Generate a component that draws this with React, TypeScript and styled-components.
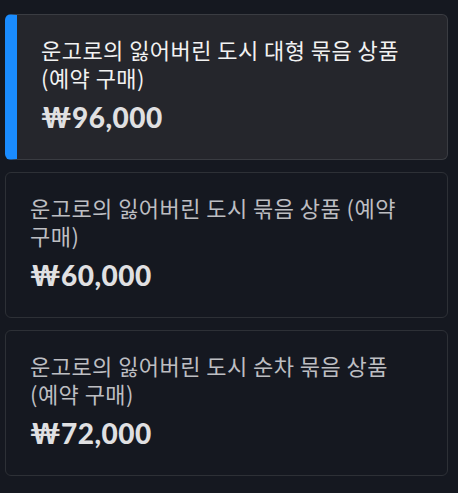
import { type FC } from "react";
import styled, { createGlobalStyle } from "styled-components";

const GlobalStyle = createGlobalStyle`
  html, body {
    margin: 0;
    background: #ffffff;
  }
  body {
    font-family: "Noto Sans CJK KR", "Noto Sans", sans-serif;
  }
`;

const ListProducts = [
  { title: "운고로의 잃어버린 도시 대형 묶음 상품 (예약 구매)", price: "₩96,000", selected: true },
  { title: "운고로의 잃어버린 도시 묶음 상품 (예약 구매)", price: "₩60,000", selected: false },
  { title: "운고로의 잃어버린 도시 순차 묶음 상품 (예약 구매)", price: "₩72,000", selected: false },
];

const Page = styled.div`
  background: #151820;
  padding: 14px 10px 17px 5px;
  display: flex;
  flex-direction: column;
  gap: 12px;
`;

const Card = styled.div<{ $selected: boolean }>`
  border: 1px solid ${({ $selected }) => ($selected ? "#3a3c42" : "#2d3036")};
  border-left: ${({ $selected }) => ($selected ? "12px solid #1a8cff" : "1px solid #2d3036")};
  border-radius: 6px;
  background: ${({ $selected }) => ($selected ? "#25262c" : "#151820")};
  padding: 20px 24px 24px;
  height: 146px;
  box-sizing: border-box;
  .title {
    font-size: 22px;
    line-height: 28px;
    letter-spacing: 0.45px;
    word-break: keep-all;
    color: ${({ $selected }) => ($selected ? "#f2f2f2" : "#bdbec2")};
  }
  .price {
    margin-top: 10px;
    font-family: Lato, "Noto Sans", sans-serif;
    font-weight: 900;
    font-size: 28px;
    line-height: 1.2;
    letter-spacing: 0.5px;
    color: #e0e0e2;
  }
`;

const App: FC = () => {
  return (
    <Page>
      <GlobalStyle />
      {ListProducts.map((product, index) => (
        <Card key={index} $selected={product.selected}>
          <div className="title">{product.title}</div>
          <div className="price">{product.price}</div>
        </Card>
      ))}
    </Page>
  );
};

export default App;
